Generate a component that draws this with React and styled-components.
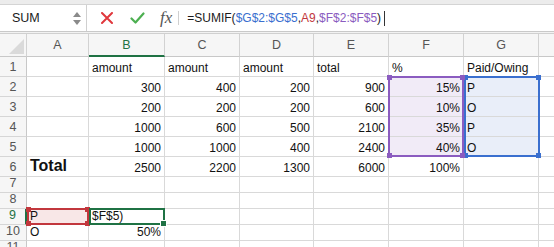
import React from "react";
import styled, { createGlobalStyle } from "styled-components";

const Global = createGlobalStyle`
  html, body { margin: 0; padding: 0; background: #fff; overflow: hidden; }
  body { font-family: "Liberation Sans", Arial, sans-serif; }
`;

const Page = styled.div`
  width: 554px;
  height: 247px;
  overflow: hidden;
  display: flex;
  flex-direction: column;
`;

const TopStrip = styled.div`
  height: 4px;
  background: #ececec;
  border-bottom: 1px solid #d4d4d4;
  flex: none;
`;

const FormulaBar = styled.div`
  height: 26px;
  flex: none;
  display: flex;
  align-items: center;
  background: #fff;
  border-bottom: 1px solid #c9c9c9;
`;

const Gap = styled.div`
  height: 1px;
  background: #f2f2f2;
  border-bottom: 1px solid #d0d0d0;
  flex: none;
`;

const NameBox = styled.div`
  width: 87px;
  height: 100%;
  box-sizing: border-box;
  border-right: 1px solid #d0d0d0;
  display: flex;
  align-items: center;
  justify-content: space-between;
  padding: 0 5px 0 12px;
  font-size: 12.5px;
  color: #1a1a1a;
`;

const Spinner = styled.div`
  display: flex;
  flex-direction: column;
  gap: 3px;
`;

const Tri = styled.div`
  width: 0;
  height: 0;
  border-left: 4px solid transparent;
  border-right: 4px solid transparent;
  ${(p) =>
    p.$down
      ? "border-top: 5px solid #8a8a8a;"
      : "border-bottom: 5px solid #8a8a8a;"}
`;

const IconBtn = styled.div`
  display: flex;
  align-items: center;
  justify-content: center;
  margin-left: ${(p) => p.$ml}px;
`;

const Fx = styled.div`
  font-family: "Liberation Serif", "Times New Roman", serif;
  font-style: italic;
  font-size: 17px;
  color: #555;
  margin-left: 15px;
  line-height: 1;
  padding-bottom: 2px;
`;

const Sep = styled.div`
  width: 1px;
  height: 14px;
  background: #cfcfcf;
  margin-left: 6px;
`;

const Formula = styled.div`
  margin-left: 8px;
  font-size: 12px;
  color: #1a1a1a;
  display: flex;
  align-items: center;
  white-space: pre;
`;

const Ref = styled.span`
  color: ${(p) => p.$c};
`;

const Caret = styled.span`
  display: inline-block;
  width: 1px;
  height: 15px;
  background: #333;
  margin-left: 3px;
`;

const Sheet = styled.div`
  position: relative;
  display: grid;
  grid-template-columns: 27px 62px 76px 75px 74px 75px 75px 75px 75px;
  grid-template-rows: 23px repeat(6, 20px) repeat(5, 16px);
  font-size: 12px;
  color: #111;
`;

const ColHead = styled.div`
  background: #f6f6f6;
  border-right: 1px solid #d2d2d2;
  border-bottom: ${(p) => (p.$sel ? "2px solid #1f7244" : "1px solid #c8c8c8")};
  box-sizing: border-box;
  display: flex;
  align-items: center;
  justify-content: center;
  color: ${(p) => (p.$sel ? "#1f7244" : "#555")};
  font-size: 12.5px;
  padding-top: ${(p) => (p.$sel ? "1px" : "0")};
`;

const Corner = styled(ColHead)`
  position: relative;
  overflow: hidden;
  &::after {
    content: "";
    position: absolute;
    right: 2px;
    bottom: 2px;
    width: 0;
    height: 0;
    border-left: 15px solid transparent;
    border-bottom: 15px solid #dadada;
  }
`;

const RowHead = styled.div`
  background: #f6f6f6;
  border-right: ${(p) => (p.$sel ? "2px solid #1f7244" : "1px solid #c8c8c8")};
  border-bottom: 1px solid #d6d6d6;
  box-sizing: border-box;
  display: flex;
  align-items: flex-end;
  justify-content: center;
  padding-bottom: 1px;
  color: ${(p) => (p.$sel ? "#1f7244" : "#555")};
  font-size: 12.5px;
  line-height: 1.1;
`;

const Cell = styled.div`
  background: ${(p) => p.$bg || "#fff"};
  border-right: 1px solid #d9d9d9;
  border-bottom: 1px solid #d9d9d9;
  box-sizing: border-box;
  display: flex;
  align-items: flex-end;
  justify-content: ${(p) => (p.$right ? "flex-end" : "flex-start")};
  padding: 0 3px 2px 3px;
  white-space: nowrap;
  overflow: visible;
  font-size: ${(p) => (p.$big ? "16px" : "12px")};
  font-weight: ${(p) => (p.$big ? "bold" : "normal")};
  line-height: 1;
  color: #111;
`;

const RangeBox = styled.div`
  position: absolute;
  pointer-events: none;
  grid-column: ${(p) => p.$col};
  grid-row: ${(p) => p.$rows};
  top: -1px;
  left: ${(p) => p.$left}px;
  right: ${(p) => p.$right}px;
  bottom: 0;
  border: 2px solid ${(p) => p.$c};
  z-index: ${(p) => p.$z};
`;

const Handle = styled.div`
  position: absolute;
  width: 5px;
  height: 5px;
  background: ${(p) => p.$c};
  ${(p) => (p.$t ? "top: -3px;" : "bottom: -3px;")}
  ${(p) => (p.$l ? "left: -3px;" : "right: -3px;")}
  ${(p) => (p.$ring ? "box-shadow: 0 0 0 1px #fff;" : "")}
`;

/* the H column is scrolled mostly out of view; its letter is not visible */
const cols = ["A", "B", "C", "D", "E", "F", "G", ""];

const rows = [
  ["", "amount", "amount", "amount", "total", "%", "Paid/Owing", ""],
  ["", "300", "400", "200", "900", "15%", "P", ""],
  ["", "200", "200", "200", "600", "10%", "O", ""],
  ["", "1000", "600", "500", "2100", "35%", "P", ""],
  ["", "1000", "1000", "400", "2400", "40%", "O", ""],
  ["Total", "2500", "2200", "1300", "6000", "100%", "", ""],
  ["", "", "", "", "", "", "", ""],
  ["", "", "", "", "", "", "", ""],
  ["P", "$F$5)", "", "", "", "", "", ""],
  ["O", "50%", "", "", "", "", "", ""],
  ["", "", "", "", "", "", "", ""],
];

const isNum = (v) => /^[0-9]+%?$/.test(v);

const PURPLE = "#8b5cc0";
const BLUE = "#3a6fcf";
const RED = "#c2373d";
const GREEN = "#1f7244";

function bgFor(r, c) {
  if (r >= 1 && r <= 4 && c === 5) return "#f1ebf7";
  if (r >= 1 && r <= 4 && c === 6) return "#e9eef9";
  if (r === 8 && c === 0) return "#f8e7e7";
  return null;
}

function Corners({ c, all = true, ring }) {
  if (!all) return <Handle $c={c} $ring={ring} />;
  return (
    <>
      <Handle $c={c} $t $l />
      <Handle $c={c} $t />
      <Handle $c={c} $l />
      <Handle $c={c} />
    </>
  );
}

export default function App() {
  return (
    <Page>
      <Global />
      <TopStrip />
      <FormulaBar>
        <NameBox>
          SUM
          <Spinner>
            <Tri />
            <Tri $down />
          </Spinner>
        </NameBox>
        <IconBtn $ml={14}>
          <svg width="12" height="12" viewBox="0 0 12 12">
            <path d="M1 1 L11 11 M11 1 L1 11" stroke="#e0383d" strokeWidth="2" strokeLinecap="round" />
          </svg>
        </IconBtn>
        <IconBtn $ml={17}>
          <svg width="15" height="12" viewBox="0 0 15 12">
            <path d="M1.5 6.5 L5.5 10.5 L13.5 1.5" stroke="#4caf50" strokeWidth="2.2" fill="none" strokeLinecap="round" strokeLinejoin="round" />
          </svg>
        </IconBtn>
        <Fx>fx</Fx>
        <Sep />
        <Formula>
          =SUMIF(<Ref $c={BLUE}>$G$2:$G$5</Ref>,<Ref $c={RED}>A9</Ref>,<Ref $c={PURPLE}>$F$2:$F$5</Ref>)
          <Caret />
        </Formula>
      </FormulaBar>
      <Gap />
      <Sheet>
        <Corner />
        {cols.map((c, i) => (
          <ColHead key={i} $sel={c === "B"}>{c}</ColHead>
        ))}
        {rows.map((row, r) => (
          <React.Fragment key={r}>
            <RowHead $sel={r === 8}>{r + 1}</RowHead>
            {row.map((v, c) => (
              <Cell key={c} $bg={bgFor(r, c)} $right={isNum(v)} $big={v === "Total"}>
                {v}
              </Cell>
            ))}
          </React.Fragment>
        ))}
        <RangeBox $col="8 / 9" $rows="3 / 7" $c={BLUE} $left={0} $right={-1} $z={2}>
          <Corners c={BLUE} />
        </RangeBox>
        <RangeBox $col="7 / 8" $rows="3 / 7" $c={PURPLE} $left={-1} $right={0} $z={3}>
          <Corners c={PURPLE} />
        </RangeBox>
        <RangeBox $col="2 / 3" $rows="10 / 11" $c={RED} $left={0} $right={0} $z={2}>
          <Corners c={RED} />
        </RangeBox>
        <RangeBox $col="3 / 4" $rows="10 / 11" $c={GREEN} $left={0} $right={0} $z={3}>
          <Corners c={GREEN} all={false} ring />
        </RangeBox>
      </Sheet>
    </Page>
  );
}
